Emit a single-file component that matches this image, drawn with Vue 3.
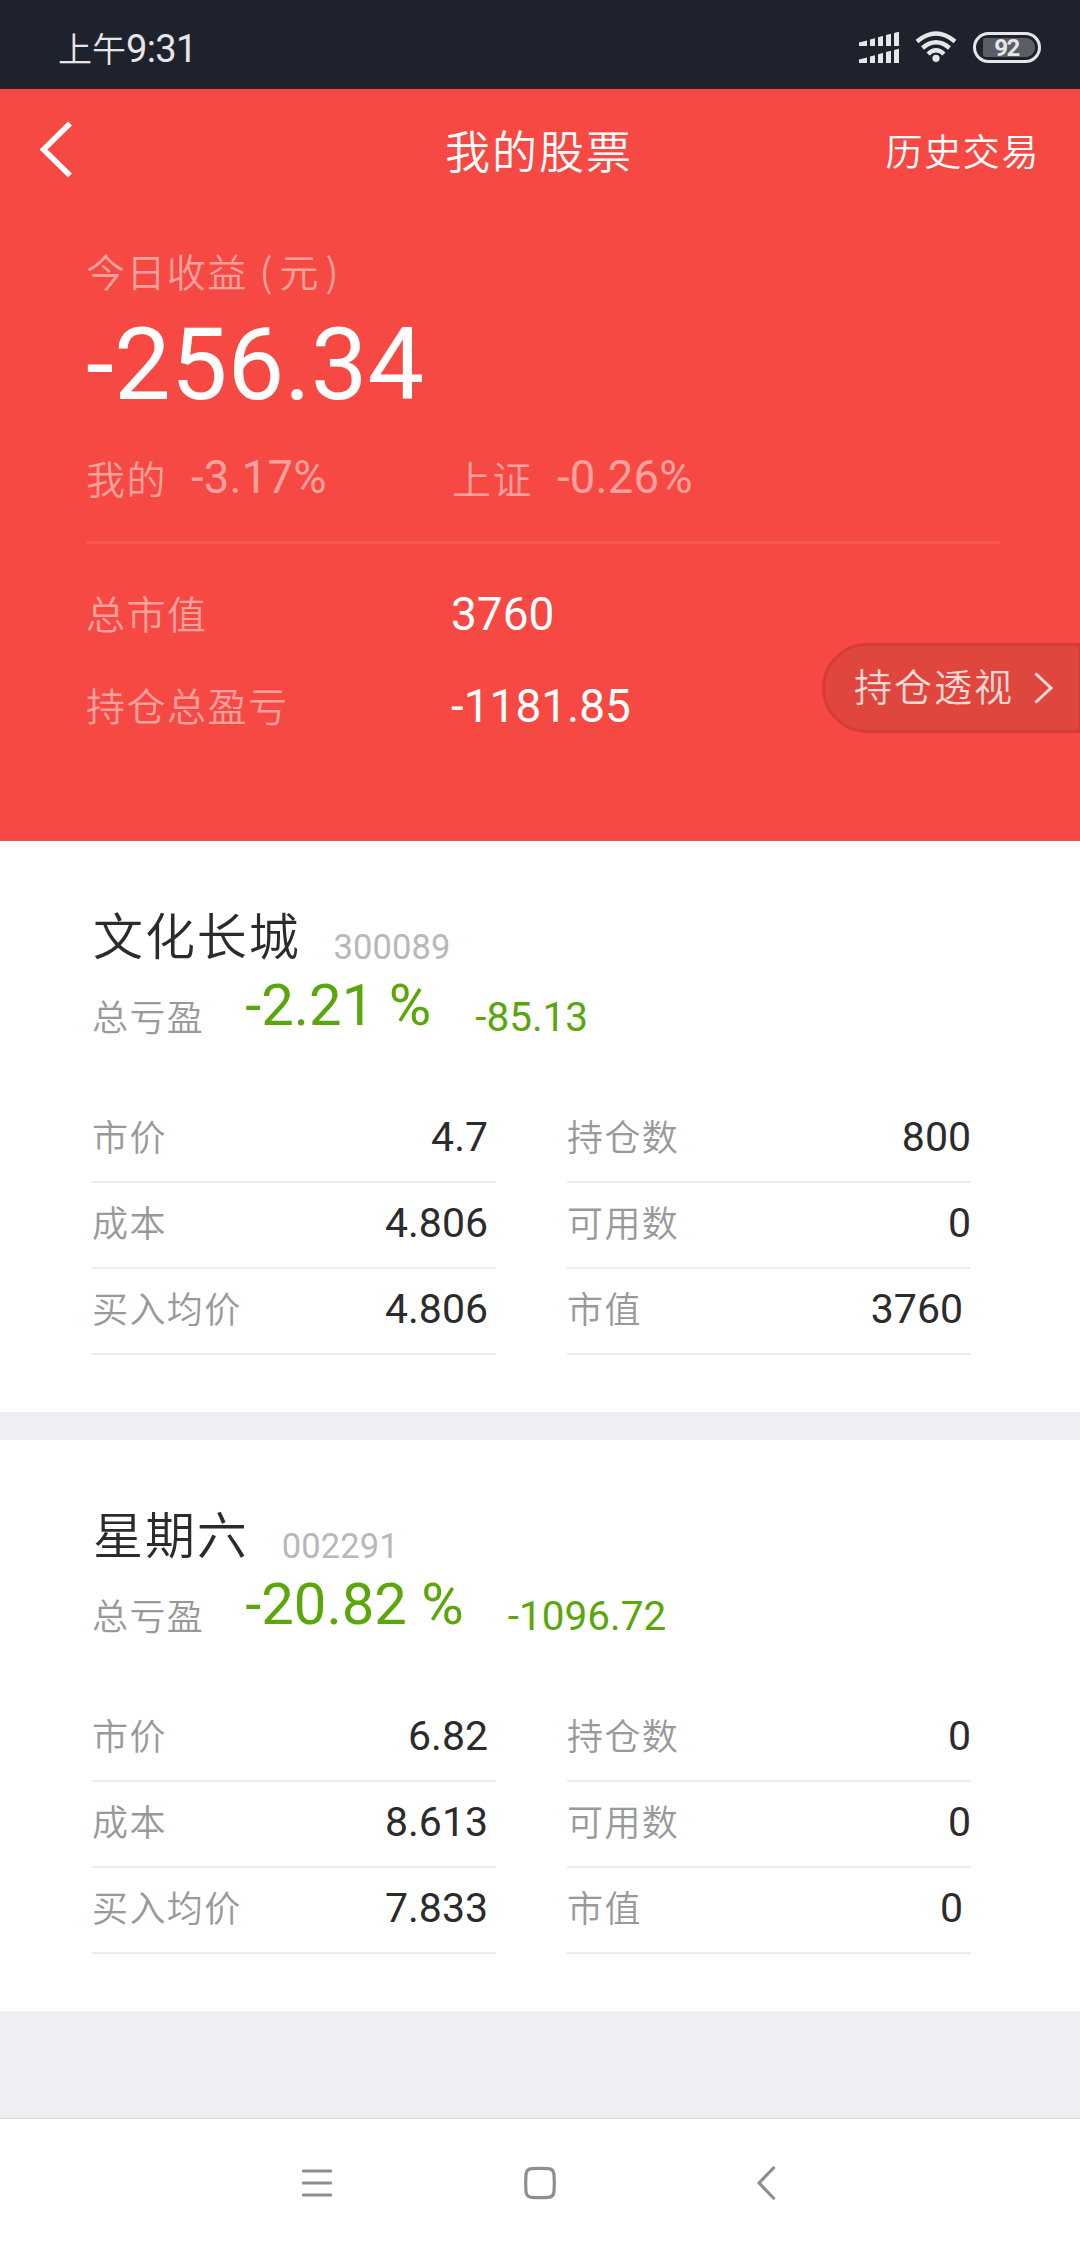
<template>
  <div class="page">
    <div class="status-bar">
      <div class="status-time"><span class="cjk">上午</span><span class="num">9:31</span></div>
      <div class="status-icons">
        <svg class="signal-icon" width="40" height="32" viewBox="0 0 40 32">
          <path d="M0 11.5L8 9.5V15H0zM11 8.5l5-1.3V15h-5zM19 6.3l5-1.3V15h-5zM27 4l5-1.3V15h-5zM35 2l5-1.3V15h-5z" />
          <path d="M0 28.5L8 26.5V32H0zM11 25.5l5-1.3V32h-5zM19 23.3l5-1.3V32h-5zM27 21l5-1.3V32h-5zM35 19l5-1.3V32h-5z" />
        </svg>
        <svg class="wifi-icon" width="42" height="32" viewBox="0 0 42 32">
          <path d="M2 10.5Q21 -5.5 40 10.5" />
          <path d="M7.5 17Q21 5.5 34.5 17" />
          <path d="M13 23Q21 15.5 29 23" />
          <circle cx="21" cy="27.3" r="3.6" />
        </svg>
        <div class="battery">
          <div class="battery-level">92</div>
        </div>
      </div>
    </div>

    <div class="header">
      <div class="title-bar">
        <svg class="back-icon" width="34" height="58" viewBox="0 0 34 58">
          <path d="M32 3.500L5.500 29.500L32 55.500" />
        </svg>
        <div class="title cjk">我的股票</div>
        <div class="history cjk">历史交易</div>
      </div>

      <div class="summary">
        <div class="today-label cjk">今日收益<span class="unit">(元)</span></div>
        <div class="today-value num">-256.34</div>
        <div class="rate-row">
          <div v-for="rate in rates" :key="rate.name" class="rate">
            <span class="summary-label cjk">{{ rate.name }}</span>
            <span class="rate-value num">{{ rate.value }}</span>
          </div>
        </div>
        <div class="total-area">
          <div v-for="total in totals" :key="total.name" class="total-row">
            <span class="summary-label cjk">{{ total.name }}</span>
            <span class="total-value num">{{ total.value }}</span>
          </div>
        </div>
      </div>

      <div class="insight-button">
        <span class="cjk">持仓透视</span>
        <svg width="20" height="32" viewBox="0 0 20 32">
          <path d="M1.5 1.5L17 16L1.5 30.5" />
        </svg>
      </div>
    </div>

    <div v-for="stock in stocks" :key="stock.code" class="stock">
      <div class="stock-title">
        <span class="stock-name cjk">{{ stock.name }}</span>
        <span class="stock-code num">{{ stock.code }}</span>
      </div>
      <div class="profit-row">
        <span class="profit-label cjk">总亏盈</span>
        <span class="profit-rate num">{{ stock.rate }} %</span>
        <span class="profit-amount num">{{ stock.amount }}</span>
      </div>
      <div class="detail">
        <div v-for="item in stock.items" :key="item.name" class="detail-item" :class="{ inset: item.inset }">
          <span class="detail-name cjk">{{ item.name }}</span>
          <span class="detail-value num">{{ item.value }}</span>
        </div>
      </div>
    </div>

    <div class="nav-bar">
      <svg width="30" height="34" viewBox="0 0 30 34">
        <path d="M1.5 5H28.5M1.5 17H28.5M1.5 29H28.5" />
      </svg>
      <svg width="34" height="34" viewBox="0 0 34 34">
        <path d="M9 2.7Q17 2 25 2.7Q30.6 3 31 8.5Q31.7 17 31 25.5Q30.6 31 25 31.3Q17 32 9 31.3Q3.4 31 3 25.5Q2.3 17 3 8.5Q3.4 3 9 2.7z" />
      </svg>
      <svg class="nav-back" width="20" height="38" viewBox="0 0 20 38">
        <path d="M17.5 4L3 19L17.5 34" />
      </svg>
    </div>
  </div>
</template>

<script setup>
const rates = [
  { name: '我的', value: '-3.17%' },
  { name: '上证', value: '-0.26%' }
];

const totals = [
  { name: '总市值', value: '3760' },
  { name: '持仓总盈亏', value: '-1181.85' }
];

// items go row by row: left column, right column
const stocks = [
  {
    name: '文化长城',
    code: '300089',
    rate: '-2.21',
    amount: '-85.13',
    items: [
      { name: '市价', value: '4.7', inset: true },
      { name: '持仓数', value: '800' },
      { name: '成本', value: '4.806', inset: true },
      { name: '可用数', value: '0' },
      { name: '买入均价', value: '4.806', inset: true },
      { name: '市值', value: '3760', inset: true }
    ]
  },
  {
    name: '星期六',
    code: '002291',
    rate: '-20.82',
    amount: '-1096.72',
    items: [
      { name: '市价', value: '6.82', inset: true },
      { name: '持仓数', value: '0' },
      { name: '成本', value: '8.613', inset: true },
      { name: '可用数', value: '0' },
      { name: '买入均价', value: '7.833', inset: true },
      { name: '市值', value: '0', inset: true }
    ]
  }
];
</script>

<style>
body {
  margin: 0;
  background: #efeef3;
}
</style>

<style scoped>
.page {
  display: flex;
  flex-direction: column;
  width: 1080px;
  height: 2248px;
  overflow: hidden;
  background: #efeef3;
}

.page * {
  box-sizing: border-box;
}

.cjk {
  font-family: "Noto Sans CJK SC", sans-serif;
  font-weight: 350;
  white-space: nowrap;
}

.num {
  font-family: Roboto, sans-serif;
  white-space: nowrap;
}

/* status bar */
.status-bar {
  display: flex;
  justify-content: space-between;
  height: 89px;
  padding: 0 39px 0 58px;
  background: #1e222d;
  color: #e6e6e8;
}

.status-time {
  display: flex;
  align-items: center;
  height: 96px;
}

.status-time .cjk {
  font-size: 34px;
  line-height: 40px;
}

.status-time .num {
  padding-top: 2px;
  font-size: 38px;
  line-height: 40px;
  letter-spacing: -0.6px;
}

.status-icons {
  display: flex;
  align-items: center;
  height: 94px;
}

.signal-icon {
  margin-right: 16px;
  fill: #e6e6e8;
}

.wifi-icon {
  margin-right: 16px;
  fill: #e6e6e8;
}

.wifi-icon path {
  fill: none;
  stroke: #e6e6e8;
  stroke-width: 4.4;
}

.battery {
  width: 68px;
  height: 31px;
  padding: 3px 3px 3px 7px;
  border: 3px solid #e6e6e8;
  border-radius: 16px;
}

.battery-level {
  width: 52px;
  height: 19px;
  border-radius: 2px 9px 9px 2px;
  background: #5b5e67;
  font-family: Roboto, sans-serif;
  font-size: 24px;
  font-weight: 700;
  line-height: 20px;
  letter-spacing: -1.5px;
  text-indent: -5px;
  text-align: center;
}

/* red header */
.header {
  position: relative;
  height: 752px;
  background: #f64943;
  color: #fff;
}

.title-bar {
  display: grid;
  grid-template-columns: 1fr auto 1fr;
  align-items: center;
  height: 120px;
  padding: 0 40px 0 38px;
}

.back-icon path {
  fill: none;
  stroke: #fff;
  stroke-width: 5.5;
}

.title {
  padding-top: 1px;
  font-size: 45px;
  line-height: 60px;
  letter-spacing: 2px;
}

.history {
  padding-top: 1px;
  justify-self: end;
  font-size: 37px;
  line-height: 60px;
  letter-spacing: 1.6px;
}

.summary {
  padding: 39px 80px 0 86px;
}

.today-label {
  height: 44px;
  font-size: 39px;
  line-height: 44px;
  letter-spacing: 1.4px;
  color: #ffa19e;
}

.unit {
  margin-left: 12px;
  letter-spacing: 7px;
}

.today-value {
  margin-top: 17px;
  font-size: 101px;
  line-height: 111px;
}

.rate-row {
  display: grid;
  grid-template-columns: 366px 1fr;
  align-items: center;
  height: 60px;
  margin: 27px 0 34px;
}

.rate {
  display: flex;
  align-items: center;
  color: #ffa19e;
}

.summary-label {
  padding-bottom: 3px;
  font-size: 39px;
  line-height: 60px;
  letter-spacing: 1.5px;
  color: #ffa19e;
}

.rate-value {
  padding-bottom: 1px;
  margin-left: 24px;
  font-size: 45.5px;
  line-height: 60px;
  letter-spacing: 0.2px;
}

.total-area {
  padding-top: 23px;
  border-top: 3px solid #fb5852;
}

.total-row {
  display: grid;
  grid-template-columns: 365px 1fr;
  align-items: center;
  height: 92px;
}

.total-value {
  padding-top: 1px;
  font-size: 46px;
  line-height: 60px;
}

/* pill stuck to the right edge, over the totals */
.insight-button {
  position: absolute;
  top: 554px;
  right: -1px;
  display: flex;
  align-items: center;
  width: 259px;
  height: 90px;
  padding-left: 29px;
  border: 3px solid #da3a38;
  border-radius: 45px 0 0 45px;
  background: #de463e;
  color: #ffd9d6;
}

.insight-button span {
  padding-bottom: 6px;
  font-size: 38px;
  line-height: 60px;
  letter-spacing: 2px;
}

.insight-button svg {
  margin-left: 20px;
}

.insight-button path {
  fill: none;
  stroke: #ffd9d6;
  stroke-width: 3;
}

/* stock cards */
.stock {
  height: 571px;
  padding: 62px 109px 57px 92px;
  background: #fff;
}

.stock + .stock {
  margin-top: 28px;
}

.stock-title {
  display: flex;
  align-items: center;
  height: 60px;
}

.stock-name {
  margin-left: 1px;
  font-size: 50px;
  line-height: 60px;
  letter-spacing: 1.9px;
  color: #2b2b2b;
}

.stock-code {
  padding-top: 27px;
  margin-left: 33px;
  font-size: 34.5px;
  line-height: 32px;
  letter-spacing: 0.1px;
  color: #b8b8b8;
}

.profit-row {
  display: flex;
  align-items: center;
  height: 84px;
}

.profit-label {
  padding-top: 19px;
  font-size: 36px;
  line-height: 40px;
  letter-spacing: 1.4px;
  color: #999;
}

.profit-rate {
  margin-left: 41px;
  font-size: 58px;
  line-height: 84px;
  color: #5aa60b;
}

.profit-amount {
  padding-top: 23px;
  margin-left: 44px;
  font-size: 40.5px;
  line-height: 40px;
  color: #5aa60b;
}

.detail {
  display: grid;
  grid-template-columns: 404px 404px;
  column-gap: 71px;
  margin-top: 50px;
}

.detail-item {
  display: flex;
  align-items: center;
  justify-content: space-between;
  height: 86px;
  border-bottom: 2px solid #ececec;
}

.detail-name {
  padding-bottom: 8px;
  font-size: 36px;
  line-height: 50px;
  letter-spacing: 1.4px;
  color: #999;
}

.detail-value {
  padding-bottom: 5px;
  font-size: 41px;
  line-height: 50px;
  color: #2b2b2b;
}

.inset .detail-value {
  padding-right: 8px;
}

/* system navigation */
.nav-bar {
  display: flex;
  align-items: center;
  gap: 191px;
  height: 130px;
  margin-top: auto;
  padding: 0 0 2px 302px;
  border-top: 1px solid #dcdcde;
  background: #fff;
}

.nav-bar path {
  fill: none;
  stroke: #8e8e8e;
  stroke-width: 3.2;
  stroke-linecap: round;
  stroke-linejoin: round;
}

.nav-back {
  margin-left: 8px;
}
</style>
